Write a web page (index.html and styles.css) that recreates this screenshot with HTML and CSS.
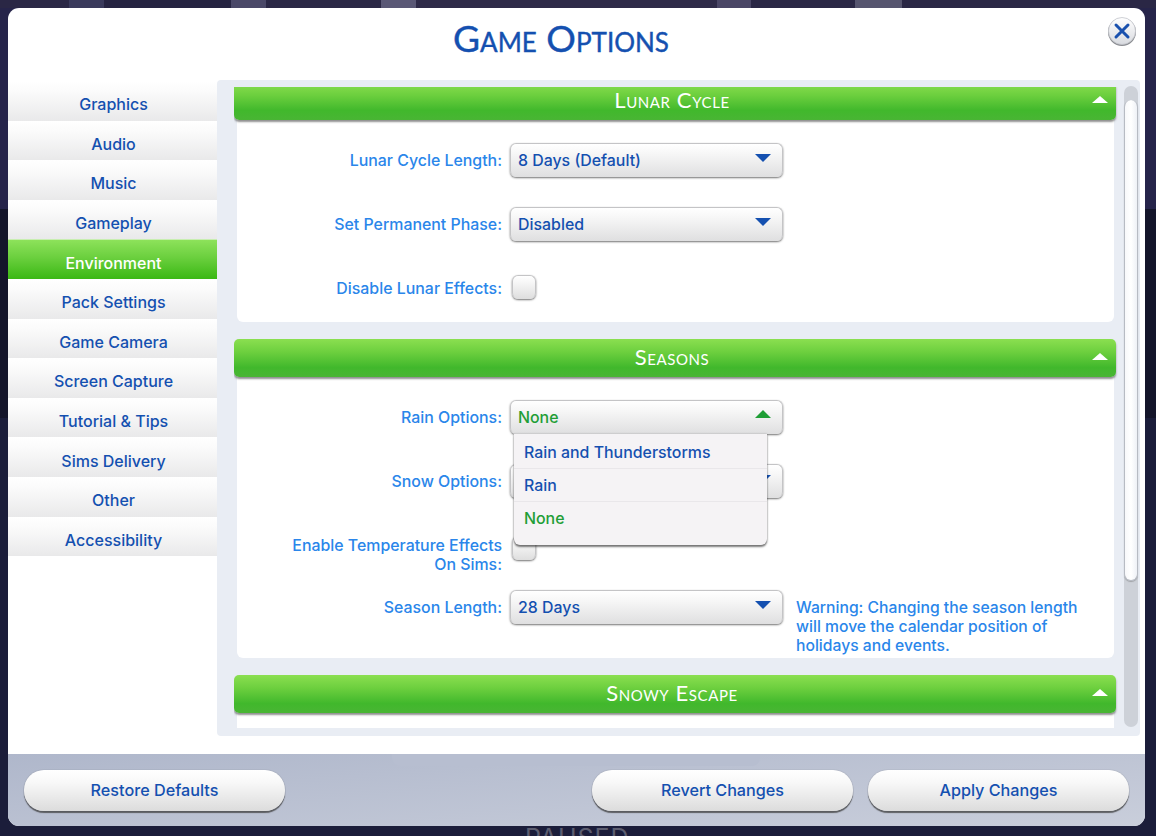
FILE: index.html
```html
<!DOCTYPE html>
<html lang="en">
<head>
<meta charset="utf-8">
<title>Game Options</title>
<link rel="stylesheet" href="styles.css">
</head>
<body class="scene">
<div class="backdrop-paused">PAUSED</div>
<main class="modal">
  <header class="modal-head">
    <h1 class="modal-title">Game Options</h1>
    <button class="close-btn" aria-label="Close">
      <svg viewBox="0 0 30 30" width="30" height="30">
        <defs><linearGradient id="cg" x1="0" y1="0" x2="0" y2="1"><stop offset="0" stop-color="#fff"/><stop offset="1" stop-color="#d9dbe0"/></linearGradient></defs>
        <circle cx="15" cy="16" r="14" fill="#8b8d92"/>
        <circle cx="15" cy="15" r="13.5" fill="url(#cg)" stroke="#c3c5cb" stroke-width="0.8"/>
        <path d="M9 9 L21 21 M21 9 L9 21" stroke="#1a51ae" stroke-width="3" stroke-linecap="round" fill="none"/>
      </svg>
    </button>
  </header>
  <div class="modal-body">
    <nav class="side-nav">
      <a class="nav-item">Graphics</a>
      <a class="nav-item">Audio</a>
      <a class="nav-item">Music</a>
      <a class="nav-item">Gameplay</a>
      <a class="nav-item nav-item-active">Environment</a>
      <a class="nav-item">Pack Settings</a>
      <a class="nav-item">Game Camera</a>
      <a class="nav-item">Screen Capture</a>
      <a class="nav-item">Tutorial &amp; Tips</a>
      <a class="nav-item">Sims Delivery</a>
      <a class="nav-item">Other</a>
      <a class="nav-item">Accessibility</a>
    </nav>
    <section class="panel">
      <div class="scroller">
        <div class="section section-scrolled">
          <div class="section-head"><span class="section-title">Lunar Cycle</span><i class="tri tri-white"></i></div>
          <div class="card">
            <div class="row"><label class="row-label">Lunar Cycle Length:</label><div class="select"><span>8 Days (Default)</span><i class="tri tri-down"></i></div></div>
            <div class="row"><label class="row-label">Set Permanent Phase:</label><div class="select"><span>Disabled</span><i class="tri tri-down"></i></div></div>
            <div class="row row-last"><label class="row-label">Disable Lunar Effects:</label><div class="check"></div></div>
          </div>
        </div>
        <div class="section">
          <div class="section-head"><span class="section-title">Seasons</span><i class="tri tri-white"></i></div>
          <div class="card card-tight">
            <div class="row">
              <label class="row-label">Rain Options:</label>
              <div class="select-wrap">
                <div class="select select-open"><span>None</span><i class="tri tri-up"></i></div>
                <ul class="menu">
                  <li class="menu-item">Rain and Thunderstorms</li>
                  <li class="menu-item">Rain</li>
                  <li class="menu-item menu-item-current">None</li>
                </ul>
              </div>
            </div>
            <div class="row"><label class="row-label">Snow Options:</label><div class="select"><span>None</span><i class="tri tri-down"></i></div></div>
            <div class="row row-two"><label class="row-label row-label-two">Enable Temperature Effects On Sims:</label><div class="check check-low"></div></div>
            <div class="row row-last row-note">
              <label class="row-label">Season Length:</label>
              <div class="select"><span>28 Days</span><i class="tri tri-down"></i></div>
              <p class="note">Warning: Changing the season length will move the calendar position of holidays and events.</p>
            </div>
          </div>
        </div>
        <div class="section">
          <div class="section-head"><span class="section-title">Snowy Escape</span><i class="tri tri-white"></i></div>
          <div class="card card-stub"></div>
        </div>
      </div>
      <div class="scrollbar"><div class="scroll-thumb"></div></div>
    </section>
  </div>
  <footer class="modal-foot">
    <div class="foot-shape"></div>
    <button class="pill">Restore Defaults</button>
    <div class="foot-right">
      <button class="pill">Revert Changes</button>
      <button class="pill">Apply Changes</button>
    </div>
  </footer>
</main>
</body>
</html>
```
FILE: styles.css
```css
* { box-sizing: border-box; }
html, body { margin: 0; height: 100%; }
.scene {
  width: 1156px;
  height: 836px;
  overflow: hidden;
  position: relative;
  padding: 8px 11px 0 8px;
  font-family: Inter, "Noto Sans", sans-serif;
  font-weight: 500;
  font-size: 15.9px;
  background:
    linear-gradient(90deg, #2a2745 0 6%, #3a3a5c 6% 9%, #262442 9% 20%, #4a4868 20% 23%, #2a2745 23% 33%, #5a5876 33% 36%, #2e2a48 36% 62%, #4a4666 62% 65%, #2a2745 65% 74%, #56556f 74% 78%, #2a2745 78% 100%) top / 100% 8px no-repeat,
    linear-gradient(180deg, #26244a 0 25%, #14152a 25% 50%, #1b1d3a 50%);
}
.backdrop-paused {
  position: absolute;
  left: 525px;
  top: 823px;
  font-size: 25px;
  font-weight: 400;
  letter-spacing: 1px;
  color: #5c5d70;
}
.modal {
  position: relative;
  width: 1137px;
  height: 818px;
  background: #fff;
  border-radius: 11px;
  display: flex;
  flex-direction: column;
  overflow: hidden;
}
.modal-head { height: 72px; flex: none; display: flex; justify-content: center; padding: 10px 31px 0 0; }
.modal-title {
  margin: 0;
  font-family: Lato, sans-serif;
  font-variant: small-caps;
  font-weight: 400;
  font-size: 37px;
  line-height: 40px;
  color: #1450b0;
  -webkit-text-stroke: 0.4px #1450b0;
}
.close-btn {
  position: absolute;
  right: 8px;
  top: 8px;
  width: 30px;
  height: 30px;
  padding: 0;
  border: 0;
  background: none;
}
.close-btn svg { display: block; }
.modal-body { height: 656px; flex: none; display: flex; }
.side-nav { width: 209px; flex: none; padding-top: 1px; display: flex; flex-direction: column; }
.nav-item {
  height: 39.6px;
  flex: none;
  display: flex;
  justify-content: center;
  align-items: center;
  padding: 7px 0 0 2px;
  font-size: 16px;
  color: #1450b0;
  background: linear-gradient(180deg, #fff 0%, #fbfbfb 25%, #e9e9ea 100%);
}
.nav-item-active {
  color: #fff;
  background: linear-gradient(180deg, #8fe35c 0%, #6cd03f 45%, #3ab814 100%);
  box-shadow: inset 0 1px 0 #c8eeb0;
}
.panel {
  width: 923px;
  flex: none;
  display: flex;
  background: #e9edf4;
  border-radius: 4px;
  padding: 7px 2px 8px 17px;
}
.scroller { width: 886px; flex: none; overflow: hidden; padding-right: 4px; height: 641px; }
.section-scrolled { margin-top: -5px; }
.section-head {
  position: relative;
  height: 38px;
  display: flex;
  justify-content: center;
  align-items: center;
  padding: 0 6px 3px 0;
  border-radius: 5px;
  background: linear-gradient(180deg, #8bdf50 0%, #6ccf3e 35%, #41b82c 75%, #49b534 100%);
  box-shadow: 0 2px 2px rgba(70, 70, 70, .6);
}
.section-title {
  font-family: Lato, sans-serif;
  font-variant: small-caps;
  font-weight: 400;
  font-size: 22px;
  letter-spacing: .6px;
  color: #fff;
}
.card {
  margin: 0 2px 17px 3px;
  padding: 23px 0 17px;
  background: #fff;
  border-radius: 0 0 6px 6px;
}
.card-tight { padding-bottom: 3px; }
.card-stub { height: 30px; padding: 0; margin-bottom: 0; border-radius: 0; }
.row { display: flex; align-items: center; height: 34px; margin-bottom: 30px; }
.row-last { margin-bottom: 0; }
.row-two { margin-bottom: 28px; }
.row-note { align-items: flex-start; height: 65px; }
.row-label { width: 265px; flex: none; text-align: right; color: #2a86ea; margin-right: 8px; line-height: 19px; }
.row-note .row-label { margin-top: 8px; }
.row-label-two { margin-top: 19px; padding-left: 48px; }
.select-wrap { position: relative; }
.select {
  width: 273px;
  height: 34px;
  flex: none;
  display: flex;
  align-items: center;
  justify-content: space-between;
  padding: 0 11px 0 7px;
  border-radius: 6px;
  color: #1450b0;
  border: 1px solid #c4c4c6;
  border-bottom: 0;
  background: linear-gradient(180deg, #fff 0%, #f8f8f8 25%, #dfdfe0 100%);
  box-shadow: 0 1px 2px rgba(40, 40, 40, .65);
}
.select-open { color: #1f9e36; }
.tri { display: block; width: 0; height: 0; border-left: 8px solid transparent; border-right: 8px solid transparent; }
.tri-down { border-top: 8px solid #1450b0; margin-top: -6px; }
.tri-up { border-bottom: 8px solid #1f9e36; margin-top: -8px; }
.tri-white { position: absolute; right: 8px; top: 14px; border-bottom: 7px solid #fff; }
.check {
  width: 24px;
  height: 24px;
  margin-left: 2px;
  margin-top: -2px;
  border-radius: 6px;
  border: 1px solid #c4c4c6;
  border-bottom: 0;
  background: linear-gradient(180deg, #fff 0%, #f6f6f6 30%, #dedede 100%);
  box-shadow: 0 1px 2px rgba(40, 40, 40, .65);
}
.check-low { margin-top: 6px; }
.note { margin: 8px 0 0 13px; width: 295px; font-size: 15.7px; line-height: 19px; color: #2a86ea; }
.menu {
  position: absolute;
  z-index: 3;
  left: 4px;
  top: 34px;
  width: 253px;
  height: 111px;
  margin: 0;
  padding: 2px 0 0;
  list-style: none;
  background: #f5f3f5;
  border-radius: 0 0 6px 6px;
  box-shadow: 0 2px 2px rgba(40, 40, 40, .6), 0 0 2px rgba(40, 40, 40, .35);
}
.menu-item {
  height: 33px;
  padding: 0 10px;
  display: flex;
  align-items: center;
  color: #1450b0;
  border-bottom: 1px solid #e9e7ea;
}
.menu-item-current { color: #1f9e36; border-bottom: 0; }
.scrollbar {
  width: 14px;
  margin-left: 4px;
  height: 641px;
  margin-top: -1px;
  padding-top: 14px;
  background: #cdd1d8;
  border-radius: 7px;
}
.scroll-thumb {
  height: 481px;
  background: linear-gradient(90deg, #f7f8fa, #fff 50%, #eef1f6);
  border: 1px solid #b7bbc3;
  border-top: 0;
  border-radius: 7px;
  box-shadow: 0 1px 1px rgba(90, 90, 90, .4);
}
.modal-foot {
  position: relative;
  margin-top: 18px;
  flex: 1;
  display: flex;
  justify-content: space-between;
  padding: 16px 16px 0;
  background: linear-gradient(175deg, #afb7cb 0%, #c9cedb 100%);
}
.foot-shape {
  position: absolute;
  left: 384px;
  top: 0;
  width: 368px;
  height: 12px;
  background: #b7bed0;
  border-radius: 0 0 8px 8px;
}
.foot-right { display: flex; gap: 15px; }
.pill {
  position: relative;
  width: 261px;
  height: 41px;
  padding: 0 0 2px;
  border: 0;
  border-radius: 20px;
  font: inherit;
  font-size: 16.2px;
  color: #1450b0;
  background: linear-gradient(180deg, #fff 0%, #f8f8f8 30%, #dcdcdc 100%);
  box-shadow: 0 2px 1px rgba(60, 60, 60, .75), 0 0 1px rgba(60, 60, 60, .5);
}
```
